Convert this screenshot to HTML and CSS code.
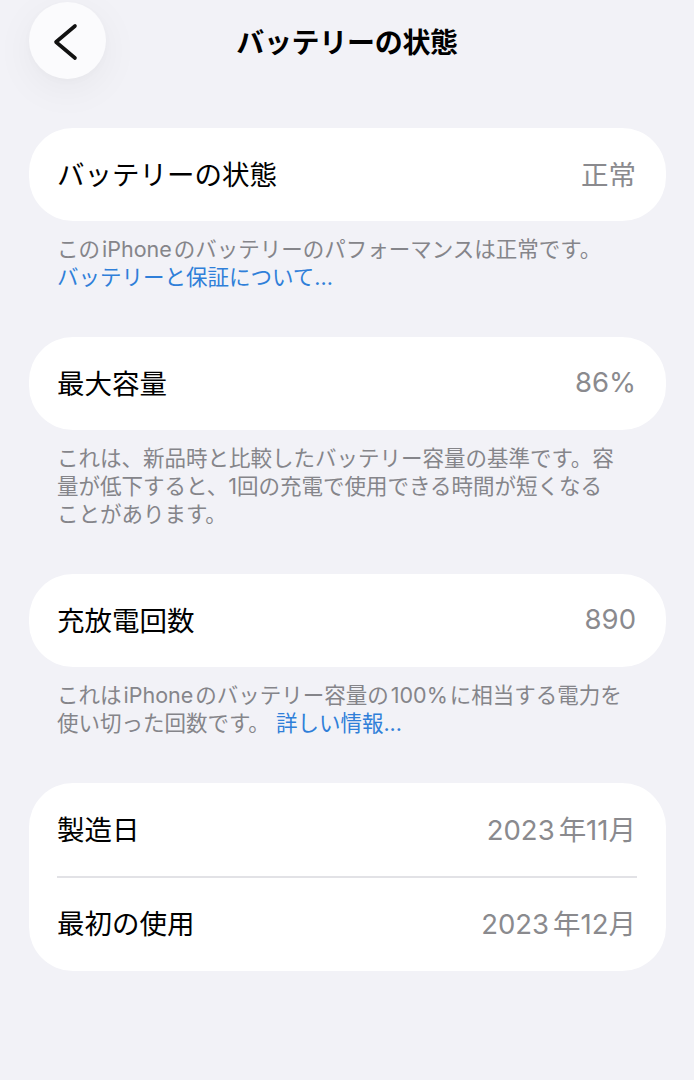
FILE: index.html
```html
<!DOCTYPE HTML>
<html lang="ja">

<head>
    <meta charset="utf-8">
    <link rel="stylesheet" href="styles.css">
</head>

<body>

    <header class="nav">
        <button class="back" aria-label="戻る">
            <svg width="77" height="77" viewBox="0 0 77 77">
                <polyline points="46,24 27,40 46,56" fill="none" stroke="#111" stroke-width="3.6" stroke-linecap="round" stroke-linejoin="round" />
            </svg>
        </button>
        <h1 class="title">バッテリーの状態</h1>
        <div class="spacer"></div>
    </header>

    <main class="list">

        <section class="card">
            <div class="row">
                <span class="label">バッテリーの状態</span>
                <span class="value">正常</span>
            </div>
        </section>
        <p class="note">
            この<span class="lat">iPhone</span>のバッテリーのパフォーマンスは正常です。<br>
            <a class="link" href="#">バッテリーと保証について...</a>
        </p>

        <section class="card">
            <div class="row">
                <span class="label">最大容量</span>
                <span class="value">86%</span>
            </div>
        </section>
        <p class="note">
            これは、新品時と比較したバッテリー容量の基準です。容<br>量が低下すると、1回の充電で使用できる時間が短くなる<br>ことがあります。
        </p>

        <section class="card">
            <div class="row">
                <span class="label">充放電回数</span>
                <span class="value">890</span>
            </div>
        </section>
        <p class="note">
            これは<span class="lat">iPhone</span>のバッテリー容量の<span class="lat">100%</span>に相当する電力を<br>使い切った回数です。 <a class="link" href="#">詳しい情報...</a>
        </p>

        <section class="card">
            <div class="row">
                <span class="label">製造日</span>
                <span class="value"><span class="year">2023</span>年11月</span>
            </div>
            <div class="divider"></div>
            <div class="row">
                <span class="label">最初の使用</span>
                <span class="value"><span class="year">2023</span>年12月</span>
            </div>
        </section>

    </main>

</body>

</html>
```

FILE: styles.css
```css
/* iOS 設定画面ふうのレイアウト */

body {
    margin: 0;
    background-color: #f2f2f7;
    font-family: "Inter", "Noto Sans CJK JP", sans-serif;
    color: #000;
}

.nav {
    display: grid;
    grid-template-columns: 77px 1fr 77px;
    align-items: center;
    padding: 1px 29px 0;
    height: 79px;
}

.back {
    width: 77px;
    height: 77px;
    padding: 0;
    border: none;
    border-radius: 50%;
    background-color: #fbfbfd;
    box-shadow: 0 10px 40px rgba(0, 0, 0, 0.05), 0 2px 8px rgba(0, 0, 0, 0.02);
    display: flex;
    align-items: center;
    justify-content: center;
}

.back svg {
    display: block;
}

.title {
    margin: 0;
    text-align: center;
    font-size: 28px;
    font-weight: 700;
    letter-spacing: -0.3px;
}

.list {
    padding: 48px 28px 0 29px;
}

.card {
    background-color: #fff;
    border-radius: 44px;
}

.row {
    height: 93px;
    box-sizing: border-box;
    display: flex;
    align-items: center;
    justify-content: space-between;
    padding: 0 30px 4px 28px;
    font-size: 27.5px;
}

.value {
    color: #8a8a8e;
}

.year {
    margin-right: 4px;
}

.divider {
    height: 1.5px;
    margin: 0 29px 0 28px;
    background-color: #e2e2e6;
}

.note {
    margin: 0 0 46px;
    padding: 14px 28px 0;
    font-size: 21.5px;
    line-height: 28px;
    color: #85858a;
}

.lat {
    margin: 0 2px;
}

.link {
    color: #2f7fd9;
    text-decoration: none;
}
```
